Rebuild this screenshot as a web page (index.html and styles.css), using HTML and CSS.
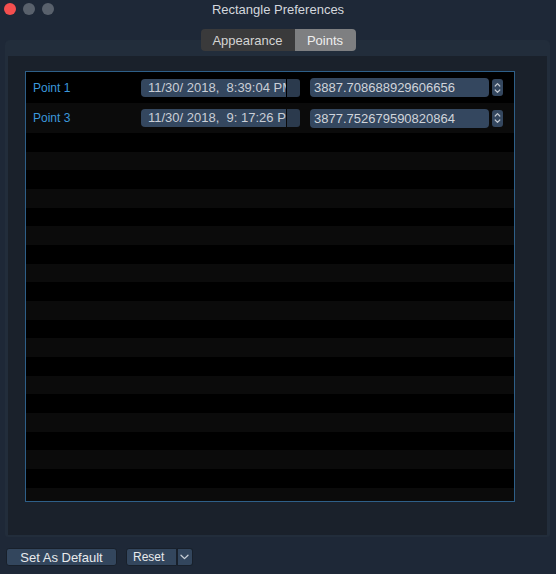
FILE: index.html
```html
<!DOCTYPE html>
<html lang="en">
<head>
<meta charset="utf-8">
<title>Rectangle Preferences</title>
<link rel="stylesheet" href="styles.css">
</head>
<body>
<div class="window">
  <header class="titlebar">
    <div class="lights">
      <span class="light red"></span>
      <span class="light"></span>
      <span class="light"></span>
    </div>
    <div class="title">Rectangle Preferences</div>
    <div></div>
  </header>

  <nav class="tabs">
    <span class="tab">Appearance</span>
    <span class="tab active">Points</span>
  </nav>

  <section class="panel">
    <div class="panel-inner">
      <div class="table">
        <div class="row odd">
          <span class="label">Point 1</span>
          <div class="date">
            <span class="date-text">11/30/ 2018,&nbsp; 8:39:04 PM</span>
            <span class="date-btn"></span>
          </div>
          <div class="num">3887.708688929606656</div>
          <div class="stepper">
            <svg width="7" height="14" viewBox="0 0 7 14"><path d="M1.2 5 L3.5 2.7 L5.8 5 M1.2 9 L3.5 11.3 L5.8 9" fill="none" stroke="#c3c9d1" stroke-width="1.2" stroke-linecap="round" stroke-linejoin="round"/></svg>
          </div>
        </div>
        <div class="row even">
          <span class="label boxed">Point 3</span>
          <div class="date">
            <span class="date-text">11/30/ 2018,&nbsp; 9: 17:26 PM</span>
            <span class="date-btn"></span>
          </div>
          <div class="num">3877.752679590820864</div>
          <div class="stepper">
            <svg width="7" height="14" viewBox="0 0 7 14"><path d="M1.2 5 L3.5 2.7 L5.8 5 M1.2 9 L3.5 11.3 L5.8 9" fill="none" stroke="#c3c9d1" stroke-width="1.2" stroke-linecap="round" stroke-linejoin="round"/></svg>
          </div>
        </div>
        <div class="filler"></div>
      </div>
    </div>
  </section>

  <footer class="footer">
    <button class="btn default-btn">Set As Default</button>
    <div class="split">
      <button class="btn split-main">Reset</button>
      <button class="btn split-arrow">
        <svg width="9" height="6" viewBox="0 0 9 6"><path d="M1 1.2 L4.5 4.6 L8 1.2" fill="none" stroke="#c9cfd6" stroke-width="1.3" stroke-linecap="round" stroke-linejoin="round"/></svg>
      </button>
    </div>
  </footer>
</div>
</body>
</html>
```

FILE: styles.css
```css
* {
  box-sizing: border-box;
}

html, body {
  margin: 0;
  padding: 0;
  background: #1e2837;
}

body {
  font-family: "Liberation Sans", Arial, sans-serif;
  color: #d0d4da;
}

.window {
  width: 556px;
  height: 574px;
  background: #1e2837;
  overflow: hidden;
}

.titlebar {
  height: 29px;
  display: grid;
  grid-template-columns: 1fr auto 1fr;
  align-items: start;
}

.lights {
  display: flex;
  gap: 7px;
  padding: 3px 0 0 4px;
}

.light {
  width: 12px;
  height: 12px;
  border-radius: 50%;
  background: #59616c;
}

.light.red {
  background: #f44f4f;
}

.title {
  font-size: 13px;
  line-height: 20px;
  color: #d3d7dd;
}

.tabs {
  position: relative;
  z-index: 1;
  display: flex;
  width: max-content;
  margin: 0 auto;
  height: 22px;
  border-radius: 4px;
  overflow: hidden;
  font-size: 13px;
}

.tab {
  display: flex;
  align-items: center;
  justify-content: center;
  height: 22px;
  background: #3a3a3b;
  color: #d4d4d4;
  width: 94px;
}

.tab.active {
  background: #7e7f81;
  color: #eeeeee;
  width: 61px;
}

.panel {
  margin: -11px 6px 0 5px;
  height: 497px;
  padding: 16px 3px 2px 3px;
  background: #222d3b;
  border-radius: 5px 5px 3px 3px;
}

.panel-inner {
  height: 479px;
  padding: 15px 32px 33px 17px;
  background: #1a212b;
}

.table {
  height: 431px;
  border: 1px solid #2e5f88;
  background: #000;
  display: flex;
  flex-direction: column;
}

.row {
  display: flex;
  align-items: center;
  padding-left: 7px;
  flex: none;
}

.row.odd {
  height: 31px;
  background: #000;
}

.row.even {
  height: 30px;
  background: #0b0b0b;
}

.label {
  width: 108px;
  font-size: 12px;
  color: #3b98dc;
}

.label.boxed {
  margin-left: -3px;
  padding-left: 3px;
  width: 111px;
}

.date {
  display: flex;
  width: 159px;
  height: 18px;
  gap: 1px;
}

.date-text {
  flex: 1;
  background: #34475f;
  border-radius: 4px 0 0 4px;
  font-size: 13px;
  line-height: 18px;
  padding-left: 7px;
  color: #c9ced6;
  white-space: nowrap;
  overflow: hidden;
}

.date-btn {
  width: 13px;
  background: #2b3a4d;
  border-radius: 0 3px 3px 0;
}

.num {
  margin-left: 10px;
  width: 179px;
  height: 19px;
  background: #34475f;
  border-radius: 4px;
  font-size: 13px;
  line-height: 19px;
  padding-left: 4px;
  color: #d0d4da;
  white-space: nowrap;
}

.stepper {
  margin-left: 3px;
  width: 11px;
  height: 17px;
  background: #34475f;
  border-radius: 3px;
  display: flex;
  align-items: center;
  justify-content: center;
}

.filler {
  flex: 1;
  background: repeating-linear-gradient(
    to bottom,
    #000 0,
    #000 18.67px,
    #0b0b0b 18.67px,
    #0b0b0b 37.33px
  );
}

.footer {
  display: flex;
  gap: 9px;
  padding: 11px 0 0 6px;
}

.btn {
  font-family: "Liberation Sans", Arial, sans-serif;
  height: 18px;
  margin: 0;
  padding: 0;
  background: #33465d;
  border: 1px solid #18202b;
  color: #e8eaec;
  cursor: default;
}

.default-btn {
  width: 111px;
  border-radius: 3px;
  font-size: 13px;
}

.split {
  display: flex;
}

.split-main {
  width: 51px;
  border-radius: 3px 0 0 3px;
  font-size: 12px;
  text-align: left;
  padding-left: 6px;
}

.split-arrow {
  width: 16px;
  border-left: 0;
  border-radius: 0 3px 3px 0;
  display: flex;
  align-items: center;
  justify-content: center;
  box-shadow: inset 1px 0 0 #18202b;
}
```
